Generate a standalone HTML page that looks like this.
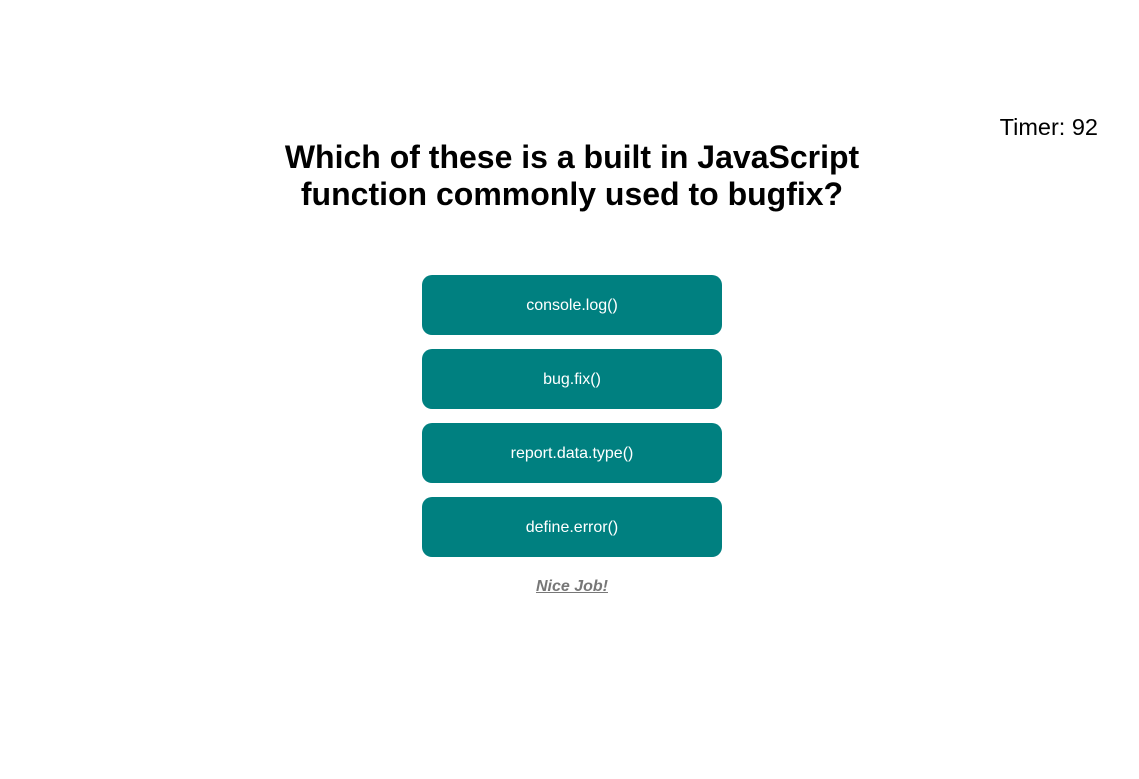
<!DOCTYPE html>
<html><head><style>
body{margin:0;background:#fff;font-family:"Liberation Sans",Arial,sans-serif;width:1139px;height:779px;position:relative;overflow:hidden}
.timer{position:absolute;right:41px;top:114px;font-size:23.5px;color:#000}
h1{position:absolute;left:0;width:1144px;top:139px;margin:0;text-align:center;font-size:32px;line-height:37px;font-weight:bold;color:#000}
.b{position:absolute;left:422px;width:300px;height:60px;padding-top:1px;box-sizing:border-box;background:#008080;border-radius:10px;color:#fff;font-size:16px;display:flex;align-items:center;justify-content:center}
.n{position:absolute;left:422px;width:300px;top:578px;text-align:center;font-size:16px;font-weight:bold;font-style:italic;text-decoration:underline;color:#777}
</style></head><body>
<div class="timer">Timer: 92</div>
<h1>Which of these is a built in JavaScript<br>function commonly used to bugfix?</h1>
<div class="b" style="top:275px">console.log()</div>
<div class="b" style="top:349px">bug.fix()</div>
<div class="b" style="top:423px">report.data.type()</div>
<div class="b" style="top:497px">define.error()</div>
<div class="n">Nice Job!</div>
</body></html>
